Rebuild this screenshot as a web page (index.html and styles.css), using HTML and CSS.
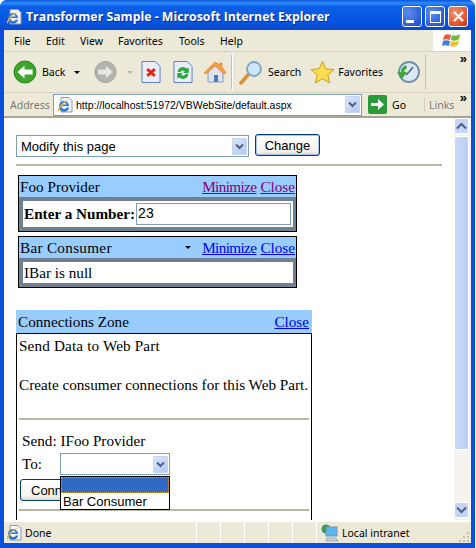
FILE: index.html
```html
<!DOCTYPE html>
<html lang="en">
<head>
  <meta charset="UTF-8">
  <title>Transformer Sample - Microsoft Internet Explorer</title>
  <link rel="stylesheet" href="styles.css">
</head>
<body>
  <svg class="defs" width="0" height="0">
    <defs>
      <symbol id="ie-page" viewBox="0 0 16 16">
        <path d="M4 .5h8l3 3v11.500H4z" fill="#f4f6fb" stroke="#8a96aa"/>
        <path d="M2 9a5 5 0 0 1 10 0H4.500a2.800 2.800 0 0 0 5.300 1.500h2.300A5 5 0 0 1 2 9zM4.600 7.500h5a2.600 2.600 0 0 0-5 0z" fill="#2b7ad6" fill-rule="evenodd"/>
        <path d="M.8 14C1 10 6 4 12.500 2.500 8 5 3.500 9.500 1.800 14.500z" fill="#e5b23a"/>
      </symbol>
    </defs>
  </svg>
  <div class="window">
    <header class="titlebar">
      <svg class="title-icon" width="16" height="16"><use href="#ie-page"/></svg>
      <span class="title-text">Transformer Sample - Microsoft Internet Explorer</span>
      <div class="win-buttons">
        <div class="win-btn"><span class="glyph-min"></span></div>
        <div class="win-btn"><span class="glyph-max"></span></div>
        <div class="win-btn close">
          <svg width="13" height="13" viewBox="0 0 13 13"><path d="M2 2l9 9M11 2l-9 9" stroke="#fff" stroke-width="2.200"/></svg>
        </div>
      </div>
    </header>

    <div class="chrome">
      <nav class="menubar">
        <div class="menu-items">
          <span class="m-file">File</span><span class="m-edit">Edit</span><span class="m-view">View</span><span class="m-fav">Favorites</span><span class="m-tools">Tools</span><span>Help</span>
        </div>
        <div class="flag">
          <svg width="20" height="18" viewBox="0 0 20 18"><path d="M2 4c2-2 4-2 7-1L8 8C5 7 3 7 1 8z" fill="#e8603a"/><path d="M10 3c3 1 5 1 8-1l-1 5c-3 2-5 2-8 1z" fill="#6cb83a"/><path d="M1 9c2-1 4-1 7 0l-1 5c-3-1-5-1-7 0z" fill="#3a80d8"/><path d="M9 9c3 1 5 1 8-1l-1 5c-3 2-5 2-8 1z" fill="#f2c230"/></svg>
        </div>
      </nav>

      <div class="toolbar">
        <div class="tool-group">
          <svg class="back-icon" width="24" height="24" viewBox="0 0 24 24"><circle cx="12" cy="12" r="11" fill="#3fa52c" stroke="#2a8020"/><path d="M4.500 12l7-6.500v4h8v5h-8v4z" fill="#fff"/></svg>
          <span class="tool-label back-label">Back</span>
          <span class="drop-arrow"></span>
          <svg class="fwd-icon" width="23" height="24" viewBox="0 0 24 24"><circle cx="12" cy="12" r="11" fill="#b4b4ae" stroke="#a0a09a"/><path d="M19.500 12l-7-6.500v4h-8v5h8v4z" fill="#e8e8e4"/></svg>
          <span class="drop-arrow off"></span>
          <svg class="page-icon" width="20" height="24" viewBox="0 0 21 24"><path d="M1 1h14l5 5v17H1z" fill="#e8eefa" stroke="#5b7bb8"/><path d="M6.500 9l8 7M14.500 9l-8 7" stroke="#e02810" stroke-width="3"/></svg>
          <svg class="page-icon" width="20" height="24" viewBox="0 0 21 24"><path d="M1 1h14l5 5v17H1z" fill="#e8eefa" stroke="#5b7bb8"/><path d="M5 12a5.500 5.500 0 0 1 9.500-3.500l2-1.500v6h-6l2-1.500a3 3 0 0 0-5 .5z" fill="#28a838"/><path d="M16 14a5.500 5.500 0 0 1-9.500 3.500l-2 1.500v-6h6l-2 1.500a3 3 0 0 0 5-.5z" fill="#28a838"/></svg>
          <svg class="home-icon" width="24" height="24" viewBox="0 0 24 24"><path d="M5 11v11h15V11l-7-6z" fill="#dde4f0" stroke="#8a9ab8"/><rect x="11" y="15" width="4" height="7" fill="#5577b8"/><path d="M1 13L12 2l5 3V3h2v4l4 6-2 1-9-8-9 8z" fill="#f2a040" stroke="#d07820" stroke-width=".6"/></svg>
        </div>
        <div class="tool-group second">
          <svg width="24" height="25" viewBox="0 0 24 25"><path d="M2 23l7-8" stroke="#d89038" stroke-width="3.500" stroke-linecap="round"/><circle cx="15" cy="9" r="7" fill="#cfe6fa" stroke="#7ea4c8" stroke-width="1.800"/></svg>
          <span class="tool-label">Search</span>
          <svg class="star" width="25" height="25" viewBox="0 0 25 25"><path d="M12.500 1l3.300 7.800 8.200.7-6.200 5.400 1.900 8.100-7.200-4.300-7.200 4.300 1.900-8.100L1 9.500l8.200-.7z" fill="#fbdc50" stroke="#c8a020"/></svg>
          <span class="tool-label fav-label">Favorites</span>
          <svg class="history" width="24" height="24" viewBox="0 0 24 24"><circle cx="13" cy="12" r="10" fill="#dbe8f4" stroke="#6f8fa8" stroke-width="1.800"/><path d="M13 12l-3 3M13 12l4-5" stroke="#506070" stroke-width="1.500"/><path d="M1 12h4a8 8 0 0 1 5-7l1 3a5 5 0 0 0-3 4h3l-5 7z" fill="#3aa83a"/></svg>
        </div>
        <div class="more">&raquo;</div>
      </div>

      <div class="addressbar">
        <span class="address-label">Address</span>
        <div class="address-box">
          <svg width="16" height="16"><use href="#ie-page"/></svg>
          <span class="url">http://localhost:51972/VBWebSite/default.aspx</span>
          <span class="combo-btn"><svg width="9" height="7" viewBox="0 0 9 7"><path d="M1 1.500l3.500 3.500L8 1.500" fill="none" stroke="#4d6185" stroke-width="2"/></svg></span>
        </div>
        <svg class="go-icon" width="19" height="19" viewBox="0 0 19 19"><rect width="19" height="19" rx="2" fill="#2d9a3a"/><path d="M3 8h7V4l6 5.500-6 5.500v-4H3z" fill="#fff"/></svg>
        <span class="go-label">Go</span>
        <span class="links">Links</span>
        <span class="links-more">&raquo;</span>
      </div>
    </div>

    <div class="viewport">
      <main class="page">
        <div class="mode-row">
          <span class="combo wide"><span class="combo-text">Modify this page</span><span class="combo-btn"><svg width="9" height="7" viewBox="0 0 9 7"><path d="M1 1.500l3.500 3.500L8 1.500" fill="none" stroke="#4d6185" stroke-width="2"/></svg></span></span>
          <span class="xp-button default">Change</span>
        </div>
        <hr class="rule top-rule">

        <section class="webpart">
          <div class="part-title"><span>Foo Provider</span><span class="part-links"><a class="visited verb-min">Minimize</a> <a class="visited">Close</a></span></div>
          <div class="part-body"><div class="part-inner"><b>Enter a Number:</b><span class="textbox">23</span></div></div>
        </section>
        <section class="webpart">
          <div class="part-title"><span class="wide-text">Bar Consumer</span><span class="part-links"><i class="verb-arrow"></i><a class="verb-min">Minimize</a> <a>Close</a></span></div>
          <div class="part-body"><div class="part-inner plain">IBar is null</div></div>
        </section>

        <section class="zone">
          <div class="zone-title"><span>Connections Zone</span><a>Close</a></div>
          <div class="zone-body">
            <p class="zone-heading">Send Data to Web Part</p>
            <p class="zone-text">Create consumer connections for this Web Part.</p>
            <hr class="rule inner-rule">
            <p class="send-line">Send: IFoo Provider</p>
            <div class="to-row">
              <span class="to-label">To:</span>
              <span class="combo narrow"><span class="combo-text"></span><span class="combo-btn"><svg width="9" height="7" viewBox="0 0 9 7"><path d="M1 1.500l3.500 3.500L8 1.500" fill="none" stroke="#4d6185" stroke-width="2"/></svg></span></span>
            </div>
            <span class="xp-button connect">Connect</span>
            <hr class="rule inner-rule last-rule">
            <div class="dropdown">
              <div class="drop-item selected"></div>
              <div class="drop-item">Bar Consumer</div>
            </div>
          </div>
        </section>
      </main>

      <div class="scrollbar">
        <div class="scroll-btn"><svg width="11" height="8" viewBox="0 0 11 8"><path d="M1 6.500l4.500-4.500L10 6.500" fill="none" stroke="#4d6185" stroke-width="2"/></svg></div>
        <div class="scroll-thumb"></div>
        <div class="scroll-track"></div>
        <div class="scroll-btn"><svg width="11" height="8" viewBox="0 0 11 8"><path d="M1 1.500l4.500 4.500L10 1.500" fill="none" stroke="#4d6185" stroke-width="2"/></svg></div>
      </div>
    </div>

    <footer class="statusbar">
      <svg class="status-icon" width="16" height="16"><use href="#ie-page"/></svg>
      <span class="status-text">Done</span>
      <span class="cell"></span><span class="cell"></span><span class="cell"></span><span class="cell"></span><span class="cell"></span>
      <span class="cell zone-cell">
        <svg width="18" height="18" viewBox="0 0 18 18"><circle cx="5" cy="5" r="4.500" fill="#3a9a58"/><rect x="5" y="3" width="11" height="9" fill="#58b8ee" stroke="#8090a8"/><path d="M6 14h9l2 3H5z" fill="#c8ccd8" stroke="#8090a8" stroke-width=".6"/></svg>
        <span>Local intranet</span>
      </span>
      <svg class="grip" width="12" height="12" viewBox="0 0 12 12"><path d="M9 1h2v2H9zM5 5h2v2H5zM9 5h2v2H9zM1 9h2v2H1zM5 9h2v2H5zM9 9h2v2H9z" fill="#c4c0aa"/></svg>
    </footer>
  </div>
</body>
</html>
```

FILE: styles.css
```css
html, body {
  margin: 0;
  padding: 0;
  height: 548px;
  overflow: hidden;
  background: #fff;
}
.defs {
  position: absolute;
}
.window {
  width: 475px;
  height: 548px;
  box-sizing: border-box;
  display: flex;
  flex-direction: column;
  background: #0a4fdc;
  border-radius: 7px 7px 0 0;
  padding: 0 4px 5px 4px;
  font-family: "Liberation Sans", Arial, sans-serif;
  font-size: 12px;
  color: #000;
}

/* title bar */
.titlebar {
  height: 30px;
  box-sizing: border-box;
  display: flex;
  align-items: center;
  flex: none;
  margin: 0 -4px;
  padding: 3px 7px 0 6px;
  border-radius: 7px 7px 0 0;
  background: linear-gradient(180deg, #0a55d8 0%, #2f8bf8 10%, #0a5fe8 22%, #0554e0 75%, #0a48c8 100%);
}
.title-icon {
  margin-right: 4px;
}
.title-text {
  flex: 1;
  color: #fff;
  font: bold 12.300px "Open Sans", sans-serif;
  text-shadow: 1px 1px 0 #0a2f90;
  white-space: nowrap;
}
.win-buttons {
  display: flex;
  gap: 3px;
}
.win-btn {
  width: 20px;
  height: 21px;
  box-sizing: border-box;
  border: 1px solid #fff;
  border-radius: 3px;
  background: radial-gradient(circle at 30% 30%, #5c8ef0, #2a5ed8 70%, #2048b8);
  display: flex;
  align-items: center;
  justify-content: center;
}
.win-btn.close {
  background: radial-gradient(circle at 30% 30%, #f09070, #e0512a 70%, #b83010);
}
.glyph-min {
  width: 8px;
  height: 3px;
  background: #fff;
  margin: 9px 4px 0 0;
}
.glyph-max {
  width: 9px;
  height: 8px;
  border: 1px solid #fff;
  border-top-width: 3px;
}

/* browser chrome */
.chrome {
  flex: none;
  background: #ece9d8;
}
.menubar {
  height: 22px;
  box-sizing: border-box;
  display: flex;
  justify-content: space-between;
  border-bottom: 1px solid #d8d2bd;
}
.menu-items {
  display: flex;
  align-items: center;
  padding-left: 10px;
  font: 10.500px "Noto Sans", sans-serif;
}
.m-file { width: 32px; }
.m-edit { width: 34px; }
.m-view { width: 38px; }
.m-fav { width: 61px; }
.m-tools { width: 41px; }
.flag {
  width: 38px;
  background: #fff;
  display: flex;
  align-items: center;
  justify-content: center;
}
.toolbar {
  height: 41px;
  box-sizing: border-box;
  display: flex;
  align-items: center;
  border-bottom: 1px solid #d8d2bd;
  position: relative;
}
.tool-group {
  display: flex;
  align-items: center;
  height: 34px;
  padding-left: 9px;
  width: 228px;
  box-sizing: border-box;
  border-right: 1px solid #c4c0aa;
  font: 10.500px "Noto Sans", sans-serif;
}
.tool-group.second {
  width: 194px;
  padding-left: 6px;
  height: 36px;
  border-left: 1px solid #fff;
}
.tool-label {
  margin-left: 5px;
}
.back-label {
  width: 26px;
}
.fav-label {
  margin-left: 3px;
}
.drop-arrow {
  width: 0;
  height: 0;
  border: 3px solid transparent;
  border-top: 3px solid #000;
  border-bottom: 0;
  margin: 0 14px 0 6px;
}
.drop-arrow.off {
  border-top-color: #b8b6a8;
  margin: 0 8px 0 10px;
}
.page-icon {
  margin-right: 12px;
}
.page-icon + .page-icon {
  margin-right: 10px;
}
.star {
  margin-left: 9px;
}
.history {
  margin-left: 13px;
}
.more {
  position: absolute;
  right: 4px;
  top: -1px;
  font: bold 13px "Liberation Sans", sans-serif;
}
.addressbar {
  height: 23px;
  display: flex;
  align-items: center;
  position: relative;
  font: 10.500px "Noto Sans", sans-serif;
}
.address-label {
  color: #7b7b72;
  margin-left: 6px;
  width: 43px;
}
.address-box {
  width: 309px;
  height: 22px;
  box-sizing: border-box;
  background: #fff;
  border: 1px solid #7f9db9;
  display: flex;
  align-items: center;
  padding-left: 3px;
}
.url {
  flex: 1;
  margin-left: 3px;
  font: 10.500px "Liberation Sans", sans-serif;
  white-space: nowrap;
}
.combo-btn {
  width: 15px;
  height: 17px;
  margin-right: 1px;
  background: linear-gradient(135deg, #dbe5fb, #b6c9f3);
  border: 1px solid #c6d4f4;
  box-sizing: border-box;
  border-radius: 1px;
  display: flex;
  align-items: center;
  justify-content: center;
  flex: none;
}
.go-icon {
  margin-left: 6px;
}
.go-label {
  margin-left: 5px;
  width: 32px;
}
.links {
  color: #7b7b72;
  padding-left: 4px;
  border-left: 1px solid #d8d2bd;
}
.links-more {
  position: absolute;
  right: 4px;
  top: -3px;
  font: bold 13px "Liberation Sans", sans-serif;
}

/* page */
.viewport {
  flex: none;
  height: 404px;
  display: flex;
  background: #fff;
  border-top: 2px solid #a8a594;
  box-sizing: border-box;
  overflow: hidden;
}
.page {
  flex: 1;
  padding: 16px 0 0 12px;
  font: 15.200px "Liberation Serif", serif;
  overflow: hidden;
}
.mode-row {
  display: flex;
  align-items: flex-start;
  gap: 6px;
}
.combo {
  display: flex;
  align-items: center;
  height: 22px;
  box-sizing: border-box;
  border: 1px solid #7f9db9;
  background: #fff;
  font: 13px "Liberation Sans", sans-serif;
}
.combo.wide {
  width: 233px;
  margin-top: 1px;
}
.combo.narrow {
  width: 110px;
}
.combo-text {
  flex: 1;
  padding-left: 4px;
}
.xp-button {
  display: flex;
  align-items: center;
  justify-content: center;
  box-sizing: border-box;
  height: 22px;
  border: 1px solid #003c74;
  border-radius: 3px;
  background: linear-gradient(180deg, #fff, #f4f3ec 80%, #dcd8ca);
  font: 13px "Liberation Sans", sans-serif;
}
.xp-button.default {
  width: 65px;
  box-shadow: inset 0 0 0 1px #a8c4ec;
}
.rule {
  border: 0;
  height: 2px;
  background: #b8b5a2;
  margin: 0;
}
.top-rule {
  width: 426px;
  margin: 7px 0 9px;
}
.webpart {
  width: 279px;
  margin: 0 0 4px 2px;
  box-sizing: border-box;
  border: 1px solid #000;
  background: #708090;
}
.part-title {
  display: flex;
  justify-content: space-between;
  align-items: center;
  height: 21px;
  background: #99ccff;
  padding: 0 1px;
}
.wide-text {
  letter-spacing: .3px;
}
.part-links {
  display: flex;
  gap: 4px;
  align-items: center;
}
a {
  color: #0000ff;
  text-decoration: underline;
}
a.visited {
  color: #800080;
}
.verb-min {
  letter-spacing: -.6px;
}
.verb-arrow {
  width: 0;
  height: 0;
  border: 3px solid transparent;
  border-top: 3px solid #000;
  border-bottom: 0;
  margin-right: 7px;
}
.part-body {
  padding: 4px 3px 4px 4px;
}
.part-inner {
  background: #fff;
  display: flex;
  align-items: center;
  height: 26px;
  padding-left: 1px;
}
.part-inner.plain {
  height: 21px;
}
.textbox {
  margin-left: 1px;
  width: 155px;
  height: 22px;
  line-height: 19px;
  box-sizing: border-box;
  border: 1px solid #7f9db9;
  font-family: "Liberation Sans", sans-serif;
  font-size: 14px;
  padding-left: 1px;
}
.zone {
  width: 296px;
  margin-top: 22px;
}
.zone-title {
  height: 23px;
  background: #99ccff;
  display: flex;
  justify-content: space-between;
  align-items: center;
  padding: 0 3px 0 2px;
}
.zone-body {
  border: 1px solid #000;
  padding: 3px 2px 0;
  position: relative;
  height: 300px;
  box-sizing: border-box;
}
.zone-body p {
  margin: 0;
  white-space: nowrap;
}
.zone-heading {
  letter-spacing: .15px;
}
.zone-body .zone-text {
  padding-top: 21px;
}
.inner-rule {
  margin-top: 24px;
}
.zone-body .send-line {
  margin: 12px 0 0 3px;
}
.to-row {
  display: flex;
  align-items: center;
  margin: 3px 0 4px 3px;
}
.to-label {
  width: 38px;
}
.xp-button.connect {
  width: 76px;
  margin-left: 1px;
  justify-content: flex-start;
  padding-left: 10px;
}
.last-rule {
  margin-top: 8px;
}
.dropdown {
  position: absolute;
  left: 43px;
  top: 142px;
  width: 110px;
  box-sizing: border-box;
  border: 1px solid #000;
  background: #fff;
  font: 13px "Liberation Sans", sans-serif;
}
.drop-item {
  height: 16px;
  line-height: 17px;
  padding-left: 2px;
}
.drop-item.selected {
  background: #316ac5;
  outline: 1px dotted #e0a040;
  outline-offset: -1px;
}

/* scrollbar */
.scrollbar {
  width: 17px;
  box-sizing: border-box;
  flex: none;
  display: flex;
  flex-direction: column;
  background: #f4f3ee;
  padding: 0 2px 2px 0;
}
.scroll-btn {
  height: 16px;
  box-sizing: border-box;
  border: 1px solid #fff;
  border-radius: 2px;
  background: #c5d5f8;
  display: flex;
  align-items: center;
  justify-content: center;
  flex: none;
}
.scroll-thumb {
  height: 314px;
  margin-top: 2px;
  flex: none;
  box-sizing: border-box;
  border: 1px solid #fff;
  border-radius: 2px;
  background: linear-gradient(90deg, #cbd9f9, #bccdf6);
}
.scroll-track {
  flex: 1;
}

/* status bar */
.statusbar {
  flex: 1;
  display: flex;
  align-items: center;
  background: #ece9d8;
  border-top: 2px solid #fff;
  font: 10.500px "Noto Sans", sans-serif;
  padding-left: 2px;
}
.status-icon {
  margin-right: 3px;
}
.status-text {
  width: 171px;
}
.cell {
  width: 23px;
  height: 100%;
  border-left: 1px solid #fff;
}
.zone-cell {
  flex: 1;
  display: flex;
  align-items: center;
  gap: 3px;
  padding-left: 4px;
}
.grip {
  margin: 8px 1px 0 0;
  flex: none;
}
```
